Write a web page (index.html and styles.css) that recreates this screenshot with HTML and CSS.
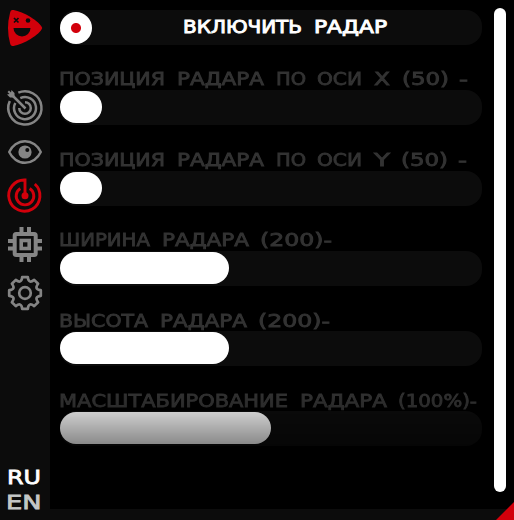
FILE: index.html
```html
<!DOCTYPE html>
<html lang="ru">
<head>
<meta charset="utf-8">
<title>Радар</title>
<link rel="stylesheet" href="styles.css">
</head>
<body>
<div class="app">
  <nav class="sidebar">
    <svg class="logo" viewBox="0 0 50 70">
      <path fill="#d2000b" d="M12 10C20 10 38 20 41.500 26.500Q43 28 41.500 29.500C38 36 20 46 12 46Q10.500 46 10 43Q6 28 10 13Q10.500 10 12 10Z"/>
      <path fill="none" stroke="#0c0c0c" stroke-width="1.700" d="M14 18l4.500 4.500m0-4.500L14 22.500"/>
      <circle cx="28" cy="20.500" r="2.300" fill="#0c0c0c"/>
      <path fill="#0c0c0c" d="M13.500 28H30.500A8.500 8.500 0 0 1 13.500 28Z"/>
    </svg>
    <svg class="icon" viewBox="0 83 50 50">
      <g fill="none" stroke="#858585" stroke-width="2.500">
        <path d="M18.300 92.700A16.600 16.600 0 1 1 9.800 101"/>
        <path d="M20.300 98.200A11 11 0 1 1 15.300 103"/>
        <path d="M25 102.200A5.800 5.800 0 1 1 19.200 108"/>
        <path d="M12 95L25.500 108.500"/>
      </g>
      <path fill="#858585" d="M11.500 90L14.500 93V97.500H10L7 94.500L9.500 94L7.500 92L9 90.500L11 92.500Z"/>
    </svg>
    <svg class="icon small" viewBox="0 133 50 37">
      <path fill="none" stroke="#858585" stroke-width="2.400" stroke-linejoin="round" d="M9.200 152C12 146 18 141.200 25 141.200S38 146 40.800 152C38 158 32 162.800 25 162.800S12 158 9.200 152Z"/>
      <circle cx="25" cy="152" r="6.600" fill="#858585"/>
      <circle cx="27.300" cy="150" r="2" fill="#0c0c0c"/>
    </svg>
    <svg class="icon" viewBox="0 170 50 50">
      <g fill="none" stroke="#d2000b" stroke-width="2.900">
        <path d="M34.800 184A15.600 15.600 0 1 1 25 180V196"/>
        <path d="M29.700 188.600A8.800 8.800 0 1 1 20.300 188.600"/>
      </g>
      <circle cx="25" cy="195.700" r="3.500" fill="#d2000b"/>
    </svg>
    <svg class="icon" viewBox="0 220 50 50">
      <g fill="none" stroke="#858585" stroke-width="4">
        <rect x="14.700" y="234" width="21" height="21" rx="1.500"/>
        <rect x="21.200" y="240.500" width="8" height="8" stroke-width="3.600"/>
        <path d="M21.500 227v6m7.500-6v6m-7.500 23v6m7.500-6v6M8 241h6m-6 7.500h6m22-7.500h6m-6 7.500h6"/>
      </g>
    </svg>
    <svg class="icon" viewBox="0 270 50 50">
      <g fill="none" stroke="#858585" stroke-width="2.700" stroke-linejoin="round">
        <path transform="translate(25 293)" d="M-2.800-15.800H2.800Q3.600-8.800 9.200-13.100L13.100-9.200Q8.800-3.600 15.800-2.800V2.800Q8.800 3.600 13.100 9.200L9.200 13.100Q3.600 8.800 2.800 15.800H-2.800Q-3.600 8.800-9.200 13.100L-13.100 9.200Q-8.800 3.600-15.800 2.800V-2.800Q-8.800-3.600-13.100-9.200L-9.200-13.100Q-3.600-8.800-2.800-15.800Z"/>
        <circle cx="25" cy="293" r="5.800"/>
      </g>
    </svg>
    <svg class="langs" viewBox="0 460 50 60">
      <text class="lang active" x="7" y="483.500" textLength="34" lengthAdjust="spacingAndGlyphs">RU</text>
      <text class="lang" x="6" y="508.500" textLength="35.500" lengthAdjust="spacingAndGlyphs">EN</text>
    </svg>
  </nav>
  <main class="panel">
    <div class="settings">
      <div class="bar toggle">
        <span class="knob"></span>
        <svg class="caption" viewBox="0 0 390 35"><text y="23"><tspan x="91" textLength="119" lengthAdjust="spacingAndGlyphs">ВКЛЮЧИТЬ</tspan> <tspan x="222" textLength="73" lengthAdjust="spacingAndGlyphs">РАДАР</tspan></text></svg>
      </div>
      <div class="field">
        <svg class="label" viewBox="0 0 424 45"><text y="40"><tspan x="-1" textLength="106" lengthAdjust="spacingAndGlyphs">ПОЗИЦИЯ</tspan> <tspan x="117" textLength="87" lengthAdjust="spacingAndGlyphs">РАДАРА</tspan> <tspan x="216" textLength="30" lengthAdjust="spacingAndGlyphs">ПО</tspan> <tspan x="257" textLength="45" lengthAdjust="spacingAndGlyphs">ОСИ</tspan> <tspan x="314" textLength="16" lengthAdjust="spacingAndGlyphs">X</tspan> <tspan x="342" textLength="47" lengthAdjust="spacingAndGlyphs">(50)</tspan> <tspan x="399" textLength="9" lengthAdjust="spacingAndGlyphs">-</tspan></text></svg>
        <div class="bar"><div class="fill" style="width:10%"></div></div>
      </div>
      <div class="field">
        <svg class="label" viewBox="0 0 424 45"><text y="41"><tspan x="-1" textLength="106" lengthAdjust="spacingAndGlyphs">ПОЗИЦИЯ</tspan> <tspan x="117" textLength="87" lengthAdjust="spacingAndGlyphs">РАДАРА</tspan> <tspan x="216" textLength="30" lengthAdjust="spacingAndGlyphs">ПО</tspan> <tspan x="257" textLength="45" lengthAdjust="spacingAndGlyphs">ОСИ</tspan> <tspan x="314" textLength="16" lengthAdjust="spacingAndGlyphs">Y</tspan> <tspan x="341" textLength="47" lengthAdjust="spacingAndGlyphs">(50)</tspan> <tspan x="398" textLength="9" lengthAdjust="spacingAndGlyphs">-</tspan></text></svg>
        <div class="bar"><div class="fill" style="width:10%"></div></div>
      </div>
      <div class="field">
        <svg class="label" viewBox="0 0 424 45"><text y="40"><tspan x="-1" textLength="91" lengthAdjust="spacingAndGlyphs">ШИРИНА</tspan> <tspan x="102" textLength="87" lengthAdjust="spacingAndGlyphs">РАДАРА</tspan> <tspan x="200" textLength="72" lengthAdjust="spacingAndGlyphs">(200)-</tspan></text></svg>
        <div class="bar"><div class="fill" style="width:40%"></div></div>
      </div>
      <div class="field">
        <svg class="label" viewBox="0 0 424 45"><text y="41"><tspan x="-1" textLength="89" lengthAdjust="spacingAndGlyphs">ВЫСОТА</tspan> <tspan x="100" textLength="87" lengthAdjust="spacingAndGlyphs">РАДАРА</tspan> <tspan x="198" textLength="72" lengthAdjust="spacingAndGlyphs">(200)-</tspan></text></svg>
        <div class="bar"><div class="fill" style="width:40%"></div></div>
      </div>
      <div class="field">
        <svg class="label" viewBox="0 0 424 45"><text y="41"><tspan x="-1" textLength="229" lengthAdjust="spacingAndGlyphs">МАСШТАБИРОВАНИЕ</tspan> <tspan x="240" textLength="87" lengthAdjust="spacingAndGlyphs">РАДАРА</tspan> <tspan x="338" textLength="79" lengthAdjust="spacingAndGlyphs">(100%)-</tspan></text></svg>
        <div class="bar"><div class="fill" style="width:50%"></div></div>
      </div>
    </div>
    <div class="scrollbar"></div>
  </main>
  <div class="corner"></div>
</div>
</body>
</html>
```

FILE: styles.css
```css
* { box-sizing: border-box; }
body { margin: 0; background: #0c0c0c; font-family: "DejaVu Sans", sans-serif; }
svg { display: block; flex: none; }
.app { position: relative; display: flex; width: 514px; height: 520px; overflow: hidden; background: #0c0c0c; }
.sidebar { display: flex; flex-direction: column; width: 50px; }
.logo { width: 50px; height: 70px; margin-bottom: 13px; }
.icon { width: 50px; height: 50px; }
.icon.small { height: 37px; }
.langs { width: 50px; height: 60px; margin-top: auto; }
.lang { font-size: 20px; fill: #c4c7c7; stroke: #c4c7c7; stroke-width: .8px; }
.lang.active { fill: #fff; stroke: #fff; }
.panel { display: flex; width: 464px; height: 509px; padding: 8px 8px 17px 10px; background: #000; }
.settings {
  width: 422px;
  height: 501px;
  padding-top: 2px;
  margin-right: 12px;
  -webkit-mask-image: linear-gradient(#000 381px, transparent 501px);
  mask-image: linear-gradient(#000 381px, transparent 501px);
}
.bar { display: flex; align-items: center; height: 35px; background: #0c0c0c; border-radius: 16px; }
.fill { height: 32px; margin-bottom: 1px; border-radius: 16px; background: #fff; }
.knob { width: 32px; height: 32px; border-radius: 50%; background: radial-gradient(circle, #d2000b 4.500px, #fff 5.500px); flex: none; }
.caption { width: 390px; height: 35px; }
.caption text { font-size: 17px; fill: #fff; stroke: #fff; stroke-width: .9px; }
.label { width: 424px; height: 45.3px; overflow: visible; }
.label text { font-size: 17px; fill: #333; stroke: #333; stroke-width: .8px; }
.scrollbar { width: 12px; height: 484px; border-radius: 6px; background: #fff; }
.corner { position: absolute; right: 0; bottom: 0; width: 18px; height: 18px; background: #d2000b; clip-path: polygon(100% 0, 100% 100%, 0 100%); }
```
